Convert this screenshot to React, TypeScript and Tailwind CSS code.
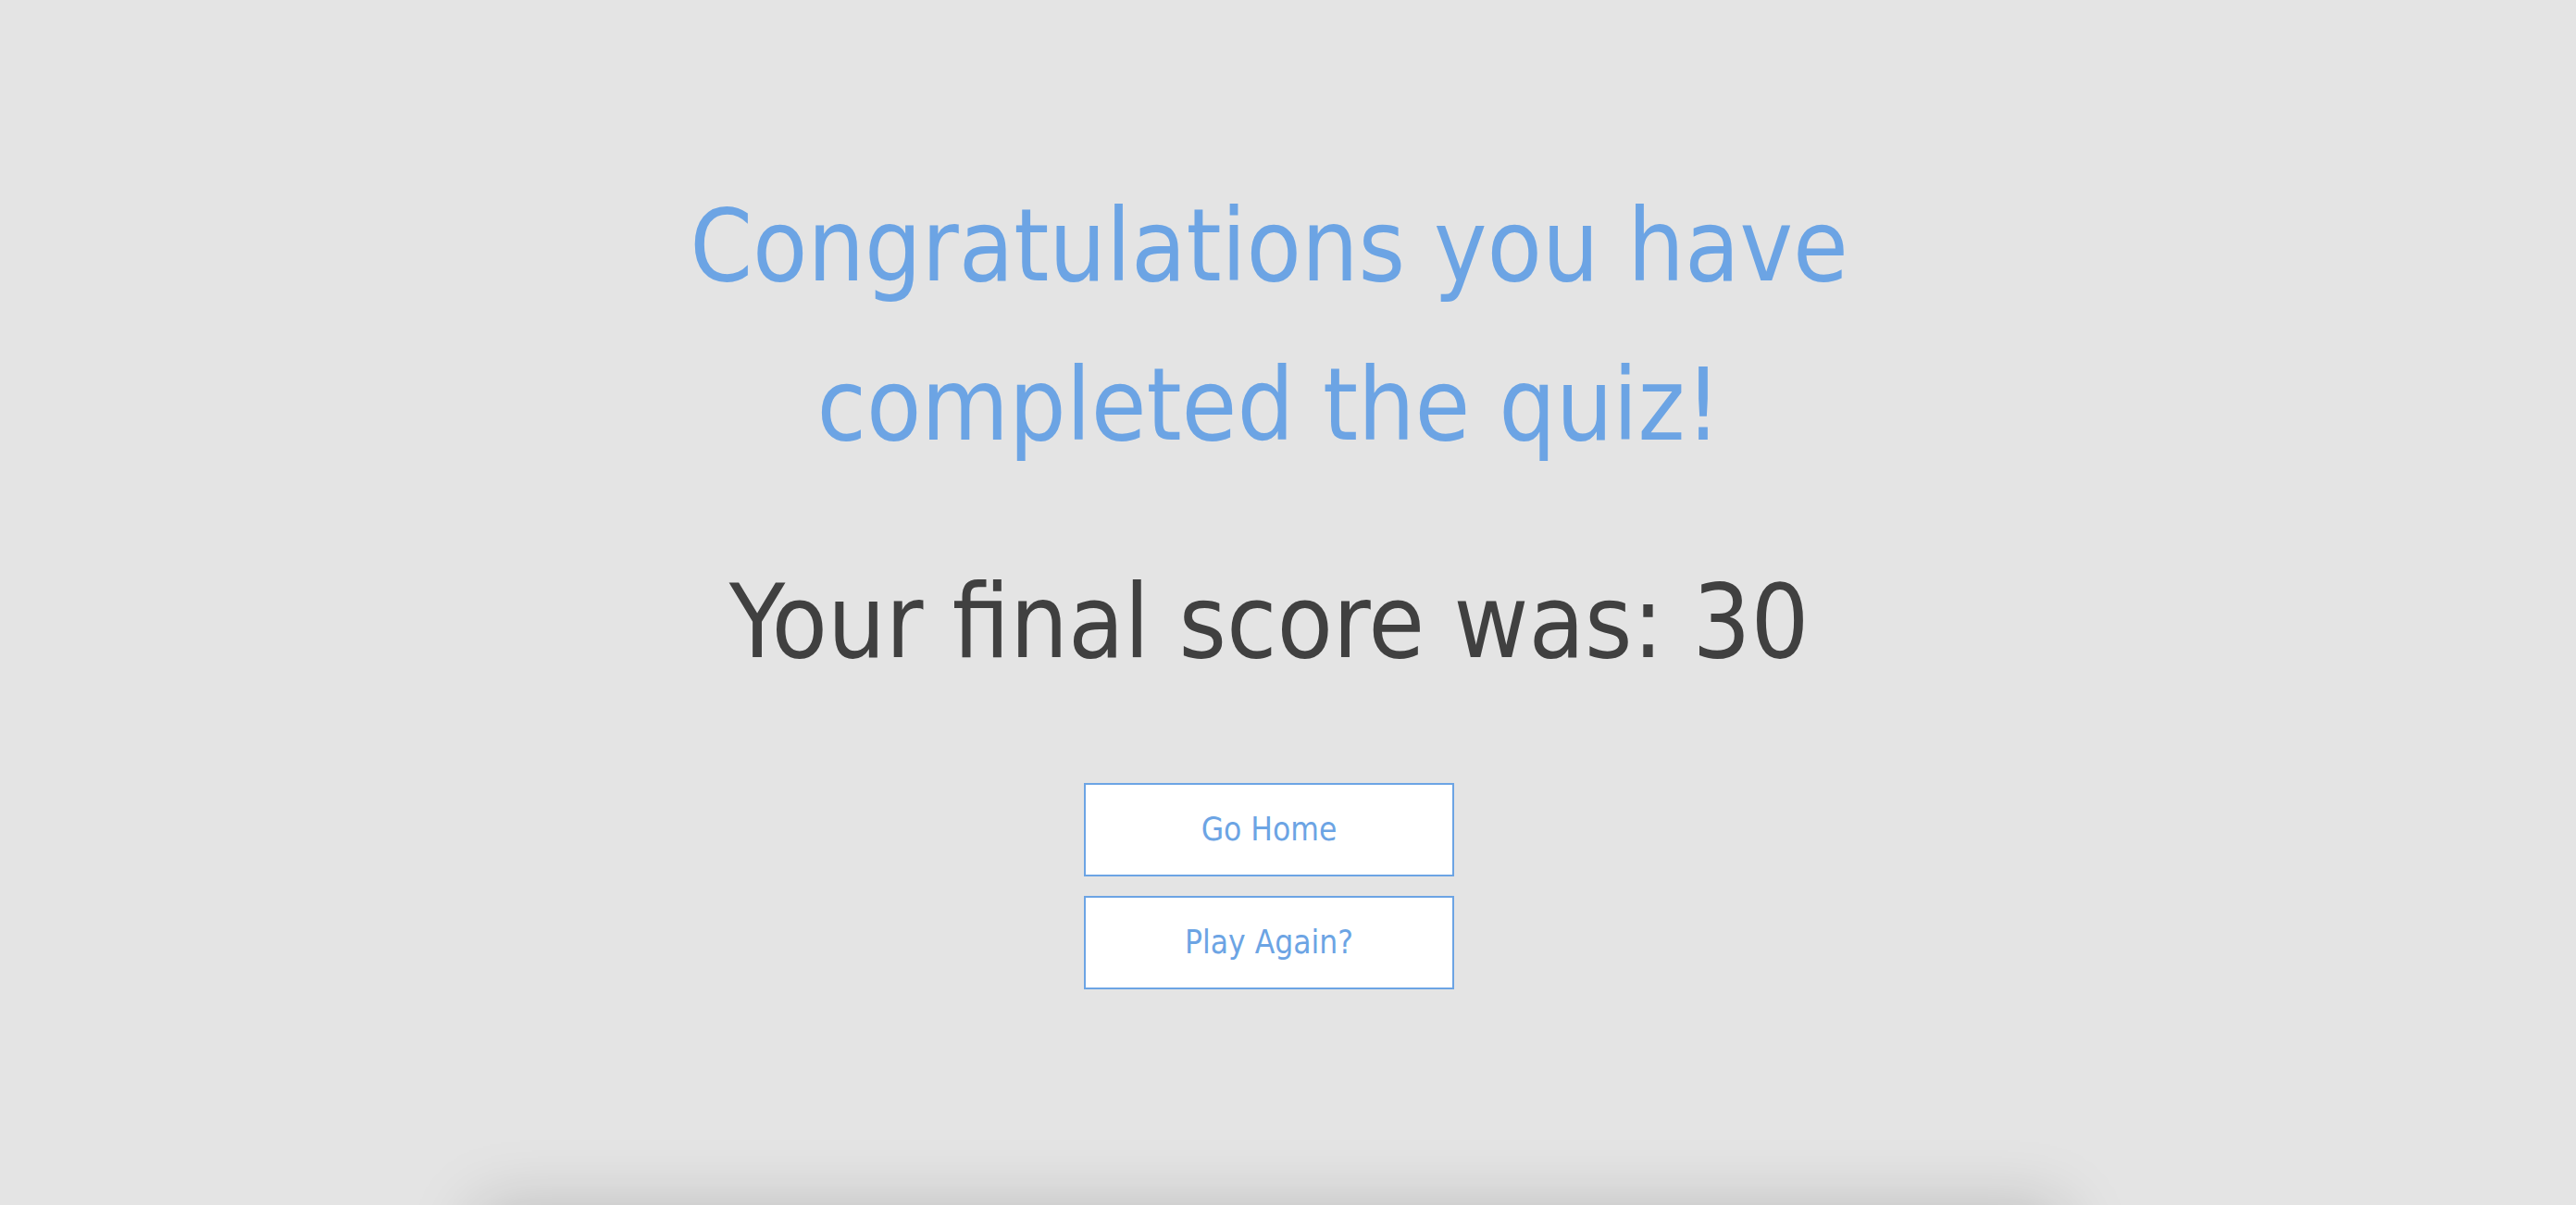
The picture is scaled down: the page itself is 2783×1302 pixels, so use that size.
import React from "react";

const FONT = "font-['DejaVu_Sans_Condensed','Liberation_Sans',sans-serif]";

export default function App() {
  return (
    <div className={`h-[1302px] overflow-hidden bg-[#e4e4e4] ${FONT}`}>
      <main className="flex flex-col items-center pr-[41px] pt-[180px]">
        <h1 className="max-w-[1340px] text-center text-[108px] leading-[172px] font-normal text-[#6ca4e4]">
          Congratulations you have completed the quiz!
        </h1>
        <p className="mt-[78px] text-[110px] leading-[140px] text-[#404040]">
          Your final score was: 30
        </p>
        <div className="mt-[104px] flex flex-col gap-[21px]">
          <button
            type="button"
            className="h-[101px] w-[400px] border-2 border-[#6ca4e4] bg-white text-[35px] text-[#6ca4e4]"
          >
            Go Home
          </button>
          <button
            type="button"
            className="h-[101px] w-[400px] border-2 border-[#6ca4e4] bg-white text-[35px] text-[#6ca4e4]"
          >
            Play Again?
          </button>
        </div>
      </main>
      <div className="mx-auto mt-[236px] h-[300px] w-[1712px] -translate-x-[20px] bg-[#e4e4e4] shadow-[0_0_70px_rgba(0,0,0,0.18)]" />
    </div>
  );
}
